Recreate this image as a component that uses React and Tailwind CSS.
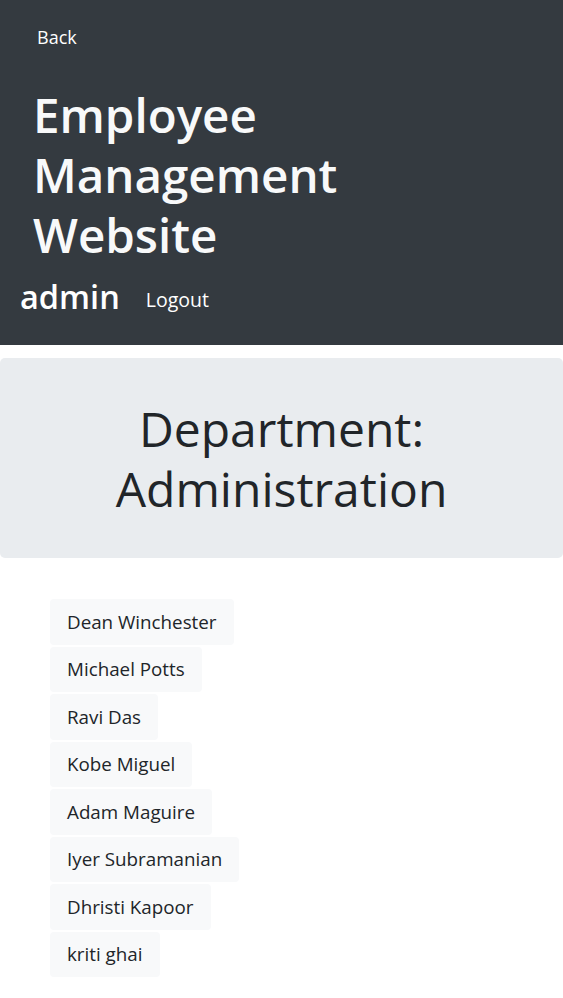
import React from "react";

const employees = [
  "Dean Winchester",
  "Michael Potts",
  "Ravi Das",
  "Kobe Miguel",
  "Adam Maguire",
  "Iyer Subramanian",
  "Dhristi Kapoor",
  "kriti ghai",
];

export default function App() {
  return (
    <div className="w-[563px] min-h-[998px] bg-white text-[#212529]" style={{ fontFamily: '"Open Sans", "Noto Sans", sans-serif' }}>
      <nav className="bg-[#343a40] h-[345px] flex flex-col">
        <div className="px-[37px] pt-[24px] h-[58px] flex items-start">
          <a href="#" className="text-white text-[18px] leading-[26px]">Back</a>
        </div>
        <h1 className="pl-[33px] pt-[27px] max-w-[440px] text-[#f8f9fa] text-[47.5px] leading-[60px] font-semibold">
          Employee Management Website
        </h1>
        <div className="flex items-center pl-[20px] mt-[10px] h-[44px]">
          <span className="text-white text-[32.5px] font-semibold leading-[40px]">admin</span>
          <a href="#" className="ml-[26px] text-white text-[19.5px] mt-[6px]">Logout</a>
        </div>
      </nav>

      <div className="mt-[13px] h-[200px] bg-[#e9ecef] rounded-[5px] flex items-center justify-center">
        <h2 className="text-center text-[48px] leading-[60px] font-medium text-[#212529] pt-[2px]">
          Department:<br />Administration
        </h2>
      </div>

      <ul className="mt-[41px] pl-[50px] flex flex-col gap-[2px]">
        {employees.map((name) => (
          <li key={name} className="self-start bg-[#f8f9fa] rounded-[4px] h-[45.5px] px-[17px] flex items-center text-[18.8px] text-[#212529]">
            {name}
          </li>
        ))}
      </ul>
    </div>
  );
}
